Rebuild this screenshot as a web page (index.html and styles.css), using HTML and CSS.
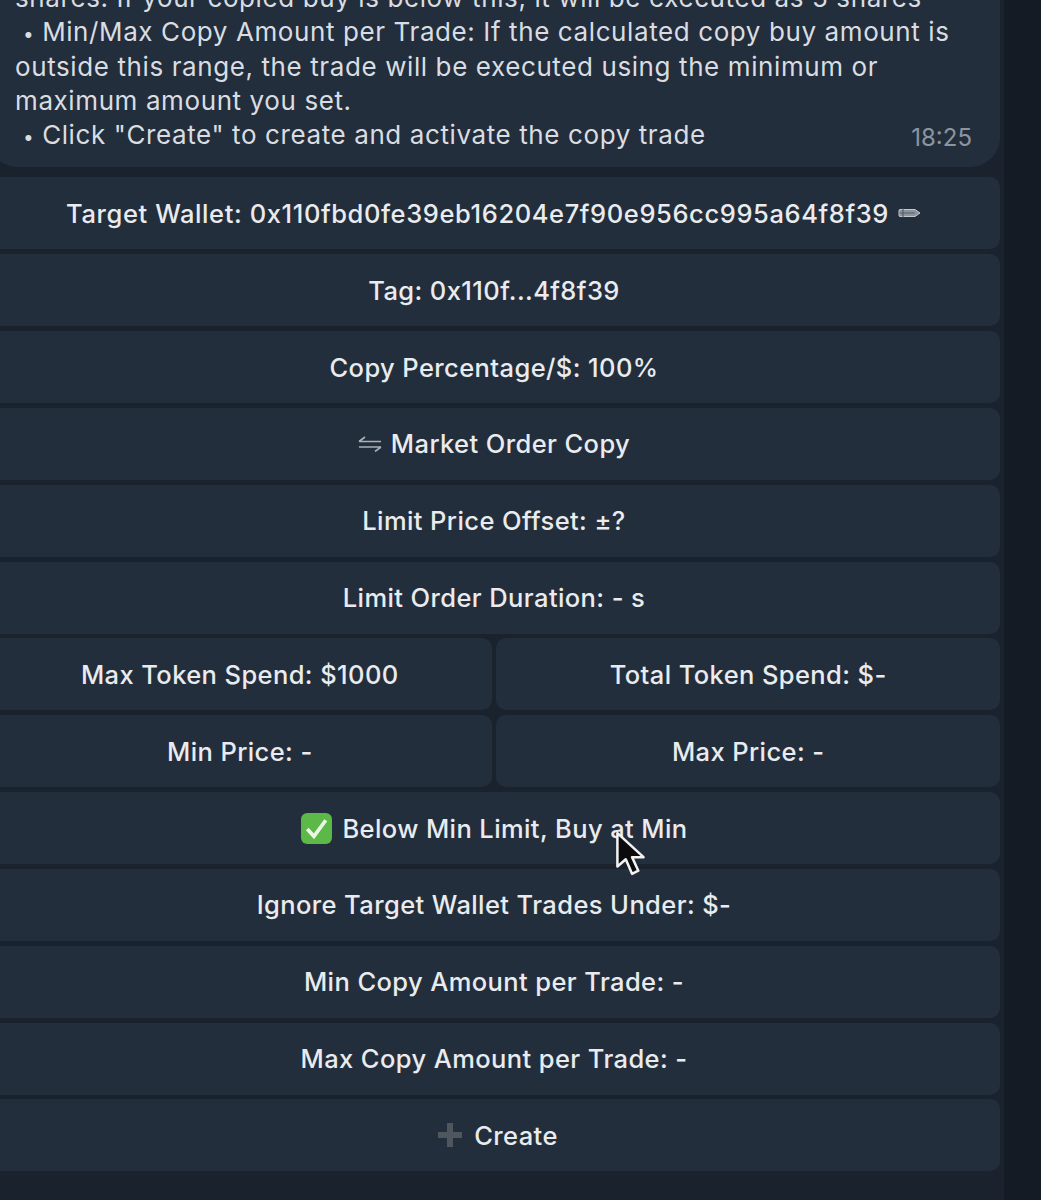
FILE: index.html
```html
<!DOCTYPE html>
<html lang="en">
<head>
  <meta charset="UTF-8" />
  <title>Copy Trade</title>
  <link rel="stylesheet" href="styles.css">
</head>
<body>
  <div class="chat">
    <div class="bubble">
      <p>shares: If your copied buy is below this, it will be executed as 5 shares</p>
      <p>&nbsp;<span class="dot">•</span> Min/Max Copy Amount per Trade: If the calculated copy buy amount is outside this range, the trade will be executed using the minimum or maximum amount you set.</p>
      <p>&nbsp;<span class="dot">•</span> Click "Create" to create and activate the copy trade</p>
      <span class="time">18:25</span>
    </div>

    <div class="keyboard">
      <button class="wide wallet">Target Wallet: 0x110fbd0fe39eb16204e7f90e956cc995a64f8f39
        <svg class="pencil" viewBox="0 0 24 12" width="24" height="12">
          <path d="M2 2.5h15l5 3.5-5 3.5H2a1 1 0 0 1-1-1v-5a1 1 0 0 1 1-1z" fill="#8d949d" stroke="#c3c7cc" stroke-width="1"/>
          <path d="M5 1.5v9M1.5 6h15" stroke="#565e69" stroke-width="1.2"/>
        </svg>
      </button>
      <button class="wide">Tag: 0x110f...4f8f39</button>
      <button class="wide">Copy Percentage/$: 100%</button>
      <button class="wide">
        <svg class="arrows" viewBox="0 0 24 16" width="24" height="16">
          <path d="M1 5.5h22M1 5.5l6-4.5M23 11h-22M23 11l-6 4.5" fill="none" stroke="#aab0b7" stroke-width="1.6"/>
        </svg>
        Market Order Copy
      </button>
      <button class="wide">Limit Price Offset: ±?</button>
      <button class="wide">Limit Order Duration: - s</button>
      <button>Max Token Spend: $1000</button>
      <button>Total Token Spend: $-</button>
      <button>Min Price: -</button>
      <button>Max Price: -</button>
      <button class="wide">
        <svg class="check" viewBox="0 0 32 32" width="33" height="33">
          <rect x="1" y="1" width="30" height="30" rx="6" fill="#5cb947"/>
          <path d="M7 16.5l6.5 7L25 8" fill="none" stroke="#eaf7e4" stroke-width="3.6"/>
        </svg>
        Below Min Limit, Buy at Min
      </button>
      <button class="wide">Ignore Target Wallet Trades Under: $-</button>
      <button class="wide">Min Copy Amount per Trade: -</button>
      <button class="wide">Max Copy Amount per Trade: -</button>
      <button class="wide create">
        <svg class="plus" viewBox="0 0 24 24" width="24" height="24">
          <path d="M12 0v24M0 12h24" stroke="#50565e" stroke-width="6"/>
        </svg>
        Create
      </button>
    </div>
  </div>

  <svg class="cursor" viewBox="0 0 32 44" width="34" height="46">
    <path d="M3 2v32l8-7 6 14 6-3-6-13h11z" fill="#0b0b0d" stroke="#f2f2f2" stroke-width="2.4" stroke-linejoin="round"/>
  </svg>
</body>
</html>
```

FILE: styles.css
```css
html, body {
  margin: 0;
  height: 1200px;
  overflow: hidden;
}

body {
  position: relative;
  font-family: Inter, Roboto, sans-serif;
  background: #1a222e;
  color: #e9ebee;
}

.chat {
  width: 1012px;
  margin: -19px 0 0 -12px;
}

body::after {
  content: "";
  position: absolute;
  top: 0;
  right: 0;
  bottom: 0;
  width: 37px;
  background: #151b25;
}

.bubble {
  position: relative;
  background: #232e3c;
  border-radius: 0 0 30px 30px;
  padding: 0 28px 15px 27px;
  font-size: 26px;
  line-height: 34.3px;
  letter-spacing: 0.6px;
  color: #d9dde1;
}

.bubble p {
  margin: 0;
}

.dot {
  font-size: 19px;
  line-height: 0;
}

.time {
  position: absolute;
  right: 28px;
  bottom: 15px;
  font-size: 24px;
  line-height: 28px;
  letter-spacing: 0;
  color: #8b95a0;
}

.keyboard {
  display: grid;
  grid-template-columns: 1fr 1fr;
  gap: 4.83px;
  margin-top: 10px;
}

button {
  height: 72px;
  padding: 0;
  border: none;
  border-radius: 10px;
  background: #232e3c;
  color: #e9ebee;
  font-family: inherit;
  font-size: 25.5px;
  font-weight: 550;
  letter-spacing: 0.4px;
  display: flex;
  align-items: center;
  justify-content: center;
  gap: 9px;
}

.wide {
  grid-column: 1 / -1;
}

.wallet {
  letter-spacing: 0.6px;
}

.create {
  gap: 12px;
  padding-left: 8px;
}

.cursor {
  position: absolute;
  left: 614px;
  top: 831px;
}
```
